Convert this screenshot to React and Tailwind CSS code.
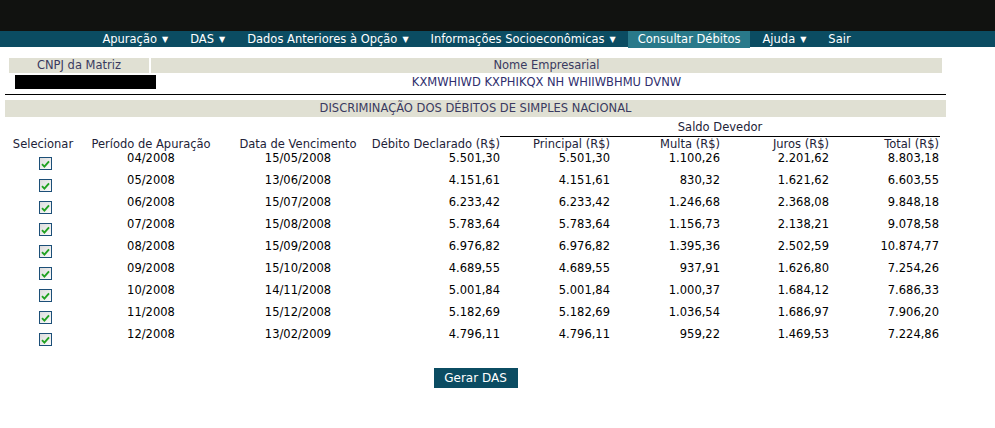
import React from "react";

const menu = [
  { label: "Apuração", arrow: true },
  { label: "DAS", arrow: true },
  { label: "Dados Anteriores à Opção", arrow: true },
  { label: "Informações Socioeconômicas", arrow: true },
  { label: "Consultar Débitos", active: true },
  { label: "Ajuda", arrow: true },
  { label: "Sair" },
];

const debitos = [
  ["04/2008", "15/05/2008", "5.501,30", "5.501,30", "1.100,26", "2.201,62", "8.803,18"],
  ["05/2008", "13/06/2008", "4.151,61", "4.151,61", "830,32", "1.621,62", "6.603,55"],
  ["06/2008", "15/07/2008", "6.233,42", "6.233,42", "1.246,68", "2.368,08", "9.848,18"],
  ["07/2008", "15/08/2008", "5.783,64", "5.783,64", "1.156,73", "2.138,21", "9.078,58"],
  ["08/2008", "15/09/2008", "6.976,82", "6.976,82", "1.395,36", "2.502,59", "10.874,77"],
  ["09/2008", "15/10/2008", "4.689,55", "4.689,55", "937,91", "1.626,80", "7.254,26"],
  ["10/2008", "14/11/2008", "5.001,84", "5.001,84", "1.000,37", "1.684,12", "7.686,33"],
  ["11/2008", "15/12/2008", "5.182,69", "5.182,69", "1.036,54", "1.686,97", "7.906,20"],
  ["12/2008", "13/02/2009", "4.796,11", "4.796,11", "959,22", "1.469,53", "7.224,86"],
];

const cols = "grid grid-cols-[76px_140px_154px_125px_110px_110px_109px_110px]";

const Checkbox = () => (
  <div className="ml-[34px] mt-[6px] w-[13px] h-[13px] border border-[#1c4f78] bg-gradient-to-br from-[#dcdcdc] to-[#fbfbfb] flex items-center justify-center">
    <svg width="9" height="8" viewBox="0 0 9 8">
      <path d="M1 4.2 L3.4 6.6 L8 1.4" fill="none" stroke="#21a121" strokeWidth="1.9" />
    </svg>
  </div>
);

const App = () => {
  return (
    <div className="w-[995px] h-[428px] bg-white text-[11.5px] leading-[14px] text-black" style={{ fontFamily: '"DejaVu Sans", Verdana, sans-serif' }}>
      <div className="h-[31px] bg-[#111210]" />
      <div className="h-[16px] bg-[#0b4c62]">
        <div className="w-[953px] flex justify-center text-white leading-[16px]">
          {menu.map((m) => (
            <div key={m.label} className={"px-[10px] mx-[1px] whitespace-nowrap " + (m.active ? "bg-[#29798a]" : "")}>
              {m.label}
              {m.arrow && <span className="ml-[5px] text-[8px] align-[1px]">▼</span>}
            </div>
          ))}
        </div>
      </div>

      <div className="w-[951px] px-[5px]">
        {/* identificação */}
        <div className="mt-[11px] mx-[4px] flex gap-[2px] text-[#3a3a60] leading-[15px]">
          <div className="w-[140px] h-[15px] bg-[#e0e0d3] text-center">CNPJ da Matriz</div>
          <div className="flex-1 h-[15px] bg-[#e0e0d3] text-center">Nome Empresarial</div>
        </div>
        <div className="mx-[4px] flex gap-[2px] h-[17px] items-center">
          <div className="w-[140px]">
            <div className="ml-[6px] w-[141px] h-[14px] bg-black" />
          </div>
          <div className="flex-1 text-center text-[#2f2f6e] pt-[1px]">KXMWHIWD KXPHIKQX NH WHIIWBHMU DVNW</div>
        </div>
        <div className="mt-[4px] border-t border-black" />

        {/* discriminação */}
        <div className="mt-[5px] h-[17px] leading-[17px] bg-[#e0e0d3] text-center text-[#3a3a60]">
          DISCRIMINAÇÃO DOS DÉBITOS DE SIMPLES NACIONAL
        </div>

        <div className={cols + " text-[#222238]"}>
          <div className="col-start-5 col-span-4 pt-[3px] pb-[2px] border-b border-black text-center mr-[-1px]">Saldo Devedor</div>
        </div>
        <div className={cols + " text-[#222238] h-[14px] whitespace-nowrap"}>
          <div className="text-center">Selecionar</div>
          <div className="text-center">Período de Apuração</div>
          <div className="text-center">Data de Vencimento</div>
          <div className="flex justify-end">Débito Declarado (R$)</div>
          <div className="text-right">Principal (R$)</div>
          <div className="text-right">Multa (R$)</div>
          <div className="text-right">Juros (R$)</div>
          <div className="text-right">Total (R$)</div>
        </div>

        {debitos.map((d) => (
          <div key={d[0]} className={cols + " h-[22px]"}>
            <div><Checkbox /></div>
            <div className="text-center">{d[0]}</div>
            <div className="text-center">{d[1]}</div>
            <div className="text-right">{d[2]}</div>
            <div className="text-right">{d[3]}</div>
            <div className="text-right">{d[4]}</div>
            <div className="text-right">{d[5]}</div>
            <div className="text-right">{d[6]}</div>
          </div>
        ))}

        <div className="mt-[19px] flex justify-center">
          <button className="w-[84px] h-[20px] bg-[#0b4c62] text-white text-[12px] leading-[20px]">Gerar DAS</button>
        </div>
      </div>
    </div>
  );
};

export default App;
